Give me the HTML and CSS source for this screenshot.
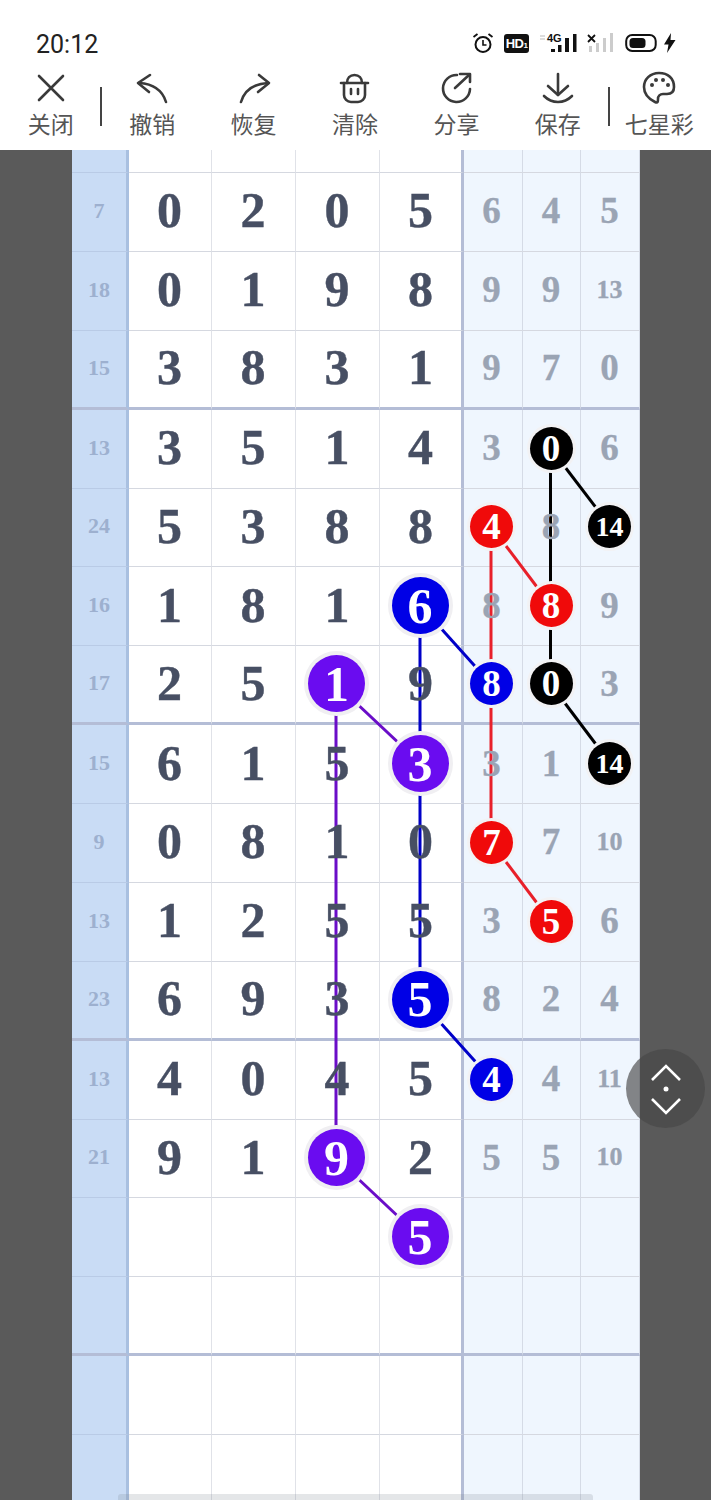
FILE: index.html
```html
<!DOCTYPE html>
<html>
<head>
	<meta charset="utf-8">
	<title>七星彩</title>
	<link rel="stylesheet" href="styles.css">
</head>
<body>
	<div class="top">
		<div class="status">
			<span class="time">20:12</span>
			<div class="status-icons">
				<svg width="22" height="22" viewBox="0 0 22 22" fill="none" stroke="#111" stroke-width="2"><circle cx="11" cy="12.500" r="7.500"/><path d="M11 8v5h3.500" stroke-width="1.600"/><path d="M1.500 5l4-3M20.500 5l-4-3" stroke-width="1.800"/></svg>
				<span class="hd">HD<small>1</small></span>
				<svg class="net-a" width="37" height="22" viewBox="0 0 37 22"><text x="7" y="10" class="net">4G</text><path d="M0 4h5M0 7h5" stroke="#bbb" stroke-width="1.200"/><rect x="11" y="17" width="4" height="3" fill="#111"/><rect x="18" y="13" width="3.500" height="7" fill="#111"/><rect x="25" y="6" width="4" height="14" fill="#111"/><rect x="33" y="2" width="3.500" height="18" fill="#111"/></svg>
				<svg width="26" height="22" viewBox="0 0 26 22"><path d="M1 3l7 7M8 3l-7 7" stroke="#111" stroke-width="1.800"/><rect x="2" y="14" width="3" height="6" fill="#ccc"/><rect x="9" y="11" width="3" height="9" fill="#ccc"/><rect x="16" y="6" width="3" height="14" fill="#ccc"/><rect x="23" y="1" width="3" height="19" fill="#ccc"/></svg>
				<svg class="batt" width="33" height="22" viewBox="0 0 33 22" fill="none"><rect x="1.200" y="3" width="29.500" height="16" rx="6" stroke="#111" stroke-width="2"/><rect x="4.500" y="6" width="16" height="10" rx="3.500" fill="#111"/></svg>
				<svg width="13" height="22" viewBox="0 0 13 22"><path d="M8 1L1 12.500h4.500L4 21l8.500-13H7.500z" fill="#111"/></svg>
			</div>
		</div>
		<div class="toolbar">
			<div class="tool">
				<svg class="ico" viewBox="0 0 34 34"><path d="M5 5l24 24M29 5L5 29"/></svg>
				<span>关闭</span>
			</div>
			<div class="sep"></div>
			<div class="tool">
				<svg class="ico" viewBox="0 0 34 34"><path d="M31 31C28 21 20 13 4 12"/><path d="M15 4L3 12l11 9"/></svg>
				<span>撤销</span>
			</div>
			<div class="tool">
				<svg class="ico" viewBox="0 0 34 34"><path d="M4 31C7 21 15 13 31 12"/><path d="M22 4l10 8-11 9"/></svg>
				<span>恢复</span>
			</div>
			<div class="tool">
				<svg class="ico" viewBox="0 0 34 34"><path d="M6 12V24a7 7 0 0 0 7 7h7a7 7 0 0 0 7-7V12"/><path d="M3 12h27"/><path d="M9 12C9 7 12 4 16.500 4S24 7 24 12"/><path d="M13 18v5M20 18v5"/></svg>
				<span>清除</span>
			</div>
			<div class="tool">
				<svg class="ico" viewBox="0 0 34 34"><path d="M18 4A13.500 13.500 0 1 0 31 18"/><path d="M16 17L30 4"/><path d="M21 3h10v8"/></svg>
				<span>分享</span>
			</div>
			<div class="tool">
				<svg class="ico" viewBox="0 0 34 34"><path d="M17 3v21"/><path d="M7 15l10 9 10-9"/><path d="M3 25c4 4 9 6 14 6s10-2 14-6"/></svg>
				<span>保存</span>
			</div>
			<div class="sep"></div>
			<div class="tool">
				<svg class="ico" viewBox="0 0 34 34"><path d="M17 2C8 2 2 8.500 2 16c0 7 5 12 11 15 3 1.500 3-1 3-3 0-3 2-5 5-5h4c4 0 7-2 7-7C32 7.500 26 2 17 2z"/><circle class="dot" cx="10" cy="14" r="2"/><circle class="dot" cx="14" cy="9" r="2"/><circle class="dot" cx="21" cy="9" r="2"/><circle class="dot" cx="26" cy="14" r="2"/></svg>
				<span>七星彩</span>
			</div>
		</div>
	</div>

	<div class="board">
		<svg class="links" width="568" height="1350" viewBox="0 0 568 1350">
			<g class="black">
				<path d="M478.500 298V534"/><path d="M478.500 298L538 376"/><path d="M478.500 534L538 613"/>
			</g>
			<g class="red">
				<path d="M419 376V692"/><path d="M419 376L478.500 455"/><path d="M419 692L478.500 771"/>
			</g>
			<g class="blue">
				<path d="M348 455V850"/><path d="M348 455L419 534"/><path d="M348 850L419 929"/>
			</g>
			<g class="purple">
				<path d="M264 534V1008"/><path d="M264 534L348 613"/><path d="M264 1008L348 1087"/>
			</g>
		</svg>

		<div class="grid">
			<div class="c s"></div><div class="c"></div><div class="c"></div><div class="c"></div><div class="c e"></div><div class="c m"></div><div class="c m"></div><div class="c m"></div>

			<div class="c s"><b>7</b></div><div class="c"><b>0</b></div><div class="c"><b>2</b></div><div class="c"><b>0</b></div><div class="c e"><b>5</b></div><div class="c m"><b>6</b></div><div class="c m"><b>4</b></div><div class="c m"><b>5</b></div>
			<div class="c s"><b>18</b></div><div class="c"><b>0</b></div><div class="c"><b>1</b></div><div class="c"><b>9</b></div><div class="c e"><b>8</b></div><div class="c m"><b>9</b></div><div class="c m"><b>9</b></div><div class="c m"><b class="two">13</b></div>
			<div class="c s t"><b>15</b></div><div class="c t"><b>3</b></div><div class="c t"><b>8</b></div><div class="c t"><b>3</b></div><div class="c e t"><b>1</b></div><div class="c m t"><b>9</b></div><div class="c m t"><b>7</b></div><div class="c m t"><b>0</b></div>

			<div class="c s"><b>13</b></div><div class="c"><b>3</b></div><div class="c"><b>5</b></div><div class="c"><b>1</b></div><div class="c e"><b>4</b></div><div class="c m"><b>3</b></div><div class="c m"><i class="ball k">0</i></div><div class="c m"><b>6</b></div>
			<div class="c s"><b>24</b></div><div class="c"><b>5</b></div><div class="c"><b>3</b></div><div class="c"><b>8</b></div><div class="c e"><b>8</b></div><div class="c m"><i class="ball r">4</i></div><div class="c m"><b>8</b></div><div class="c m"><i class="ball k two">14</i></div>
			<div class="c s"><b>16</b></div><div class="c"><b>1</b></div><div class="c"><b>8</b></div><div class="c"><b>1</b></div><div class="c e"><i class="ball big u">6</i></div><div class="c m"><b>8</b></div><div class="c m"><i class="ball r">8</i></div><div class="c m"><b>9</b></div>
			<div class="c s t"><b>17</b></div><div class="c t"><b>2</b></div><div class="c t"><b>5</b></div><div class="c t"><i class="ball big p">1</i></div><div class="c e t"><b>9</b></div><div class="c m t"><i class="ball u">8</i></div><div class="c m t"><i class="ball k">0</i></div><div class="c m t"><b>3</b></div>

			<div class="c s"><b>15</b></div><div class="c"><b>6</b></div><div class="c"><b>1</b></div><div class="c"><b>5</b></div><div class="c e"><i class="ball big p">3</i></div><div class="c m"><b>3</b></div><div class="c m"><b>1</b></div><div class="c m"><i class="ball k two">14</i></div>
			<div class="c s"><b>9</b></div><div class="c"><b>0</b></div><div class="c"><b>8</b></div><div class="c"><b>1</b></div><div class="c e"><b>0</b></div><div class="c m"><i class="ball r">7</i></div><div class="c m"><b>7</b></div><div class="c m"><b class="two">10</b></div>
			<div class="c s"><b>13</b></div><div class="c"><b>1</b></div><div class="c"><b>2</b></div><div class="c"><b>5</b></div><div class="c e"><b>5</b></div><div class="c m"><b>3</b></div><div class="c m"><i class="ball r">5</i></div><div class="c m"><b>6</b></div>
			<div class="c s t"><b>23</b></div><div class="c t"><b>6</b></div><div class="c t"><b>9</b></div><div class="c t"><b>3</b></div><div class="c e t"><i class="ball big u">5</i></div><div class="c m t"><b>8</b></div><div class="c m t"><b>2</b></div><div class="c m t"><b>4</b></div>

			<div class="c s"><b>13</b></div><div class="c"><b>4</b></div><div class="c"><b>0</b></div><div class="c"><b>4</b></div><div class="c e"><b>5</b></div><div class="c m"><i class="ball u">4</i></div><div class="c m"><b>4</b></div><div class="c m"><b class="two">11</b></div>
			<div class="c s"><b>21</b></div><div class="c"><b>9</b></div><div class="c"><b>1</b></div><div class="c"><i class="ball big p">9</i></div><div class="c e"><b>2</b></div><div class="c m"><b>5</b></div><div class="c m"><b>5</b></div><div class="c m"><b class="two">10</b></div>
			<div class="c s"></div><div class="c"></div><div class="c"></div><div class="c"></div><div class="c e"><i class="ball big p">5</i></div><div class="c m"></div><div class="c m"></div><div class="c m"></div>
			<div class="c s t"></div><div class="c t"></div><div class="c t"></div><div class="c t"></div><div class="c e t"></div><div class="c m t"></div><div class="c m t"></div><div class="c m t"></div>

			<div class="c s"></div><div class="c"></div><div class="c"></div><div class="c"></div><div class="c e"></div><div class="c m"></div><div class="c m"></div><div class="c m"></div>
			<div class="c s"></div><div class="c"></div><div class="c"></div><div class="c"></div><div class="c e"></div><div class="c m"></div><div class="c m"></div><div class="c m"></div>
		</div>
		<div class="scroll"></div>
	</div>

	<div class="float">
		<svg width="34" height="52" viewBox="0 0 34 52" fill="none" stroke="#fff" stroke-width="2.600"><path d="M3 17L17 3l14 14"/><path d="M3 36l14 14 14-14"/><circle cx="17" cy="26" r="2.500" fill="#fff" stroke="none"/></svg>
	</div>
</body>
</html>
```

FILE: styles.css
```css
html, body {
	margin: 0;
	padding: 0;
}
body {
	width: 711px;
	height: 1500px;
	overflow: hidden;
	position: relative;
	background: #5a5a5a;
	font-family: "Liberation Serif", serif;
}

.top {
	height: 150px;
	background: #fff;
	font-family: "Noto Sans CJK SC", "Noto Sans", sans-serif;
}
.status {
	height: 71px;
	box-sizing: border-box;
	padding: 30px 35px 0 36px;
	display: flex;
	justify-content: space-between;
	align-items: flex-start;
}
.time {
	font-family: Roboto, sans-serif;
	font-size: 25px;
	line-height: 29px;
	color: #222;
}
.status-icons {
	display: flex;
	align-items: center;
	gap: 10px;
	height: 26px;
}
.status-icons svg {
	display: block;
}
.status-icons .net-a {
	margin-left: 1px;
}
.status-icons .batt {
	margin-left: 2px;
	margin-right: -5px;
}
.hd {
	width: 25px;
	height: 19px;
	background: #111;
	border-radius: 3px;
	color: #fff;
	font-family: "Liberation Sans", sans-serif;
	font-weight: bold;
	font-size: 13px;
	line-height: 19px;
	text-align: center;
	letter-spacing: -0.5px;
}
.hd small {
	font-size: 8px;
}
.net {
	font-family: "Liberation Sans", sans-serif;
	font-weight: bold;
	font-size: 11px;
	fill: #111;
}

.toolbar {
	display: flex;
	width: 710px;
	height: 79px;
}
.tool {
	flex: 1;
	display: flex;
	flex-direction: column;
	align-items: center;
	color: #555;
	font-size: 23px;
	line-height: 30px;
}
.tool span {
	margin-top: 3px;
	white-space: nowrap;
}
.ico {
	width: 34px;
	height: 34px;
	fill: none;
	stroke: #3a3a3a;
	stroke-width: 2.600;
	stroke-linecap: round;
	stroke-linejoin: round;
}
.ico .dot {
	fill: #3a3a3a;
	stroke: none;
}
.sep {
	width: 2px;
	height: 39px;
	margin: 16px -1px 0;
	background: #444;
}

.board {
	position: relative;
	width: 568px;
	height: 1350px;
	margin-left: 72px;
	overflow: hidden;
}
.links {
	position: absolute;
	left: 0;
	top: 0;
	z-index: 1;
	fill: none;
	stroke-width: 3px;
}
.black { stroke: #000; }
.red { stroke: #e8202a; }
.blue { stroke: #0000c8; }
.purple { stroke: #6a0dc8; }

.grid {
	display: grid;
	grid-template-columns: 57px 83px 84px 84px 84px 59px 58px 59px;
	grid-template-rows: 23px;
	grid-auto-rows: 78.875px;
}
.c {
	box-sizing: border-box;
	display: flex;
	align-items: center;
	justify-content: center;
	padding-right: 1px;
	background: #fff;
	border-right: 1px solid #e0e2e8;
	border-bottom: 1px solid #d5d8e0;
}
.c.e {
	padding-right: 0;
	border-right: 3px solid #b4bdd6;
}
.c.m {
	background: #eff6fe;
	border-right-color: #d5dbe6;
}
.c.e + .c.m {
	padding-right: 3px;
}
.c.s {
	padding-right: 0;
	background: #c9dcf5;
	border-right: 3px solid #a9c0e0;
	border-bottom-color: #b9cbe6;
}
.c.t {
	border-bottom: 3px solid #b4bdd6;
}

.c b {
	position: relative;
	z-index: 2;
	margin-bottom: 3px;
	font-size: 50px;
	line-height: 1;
	color: #474f63;
	-webkit-text-stroke: 0.4px #474f63;
}
.c.m b {
	margin-bottom: 2px;
	font-size: 37px;
	color: #9aa4b4;
	-webkit-text-stroke: 0.3px #9aa4b4;
}
.c.m b.two {
	font-size: 26px;
}
.c.s b {
	margin-bottom: 2px;
	font-size: 22px;
	color: #9db0cf;
	-webkit-text-stroke: 0;
}

.ball {
	position: relative;
	z-index: 3;
	flex: none;
	display: flex;
	align-items: center;
	justify-content: center;
	width: 43px;
	height: 43px;
	margin-bottom: 1px;
	border-radius: 50%;
	box-shadow: 0 0 0 3px #f2f2f4;
	color: #fff;
	font-style: normal;
	font-weight: bold;
	font-size: 37px;
}
.ball.two {
	font-size: 28px;
}
.ball.big {
	width: 57px;
	height: 57px;
	margin-right: 1px;
	box-shadow: 0 0 0 4px #f0eff2;
	font-size: 50px;
}
.k { background: #000; }
.r { background: #f00a0a; }
.u { background: #0000e6; }
.p { background: #6a0cf0; }

.scroll {
	position: absolute;
	left: 46px;
	top: 1344px;
	width: 475px;
	height: 6px;
	z-index: 4;
	background: rgba(120, 130, 140, 0.2);
	border-radius: 3px 3px 0 0;
}

.float {
	position: absolute;
	left: 626px;
	top: 1049px;
	width: 79px;
	height: 79px;
	border-radius: 50%;
	background: rgba(70, 70, 70, 0.65);
	display: flex;
	align-items: center;
	justify-content: center;
	z-index: 5;
}
```
